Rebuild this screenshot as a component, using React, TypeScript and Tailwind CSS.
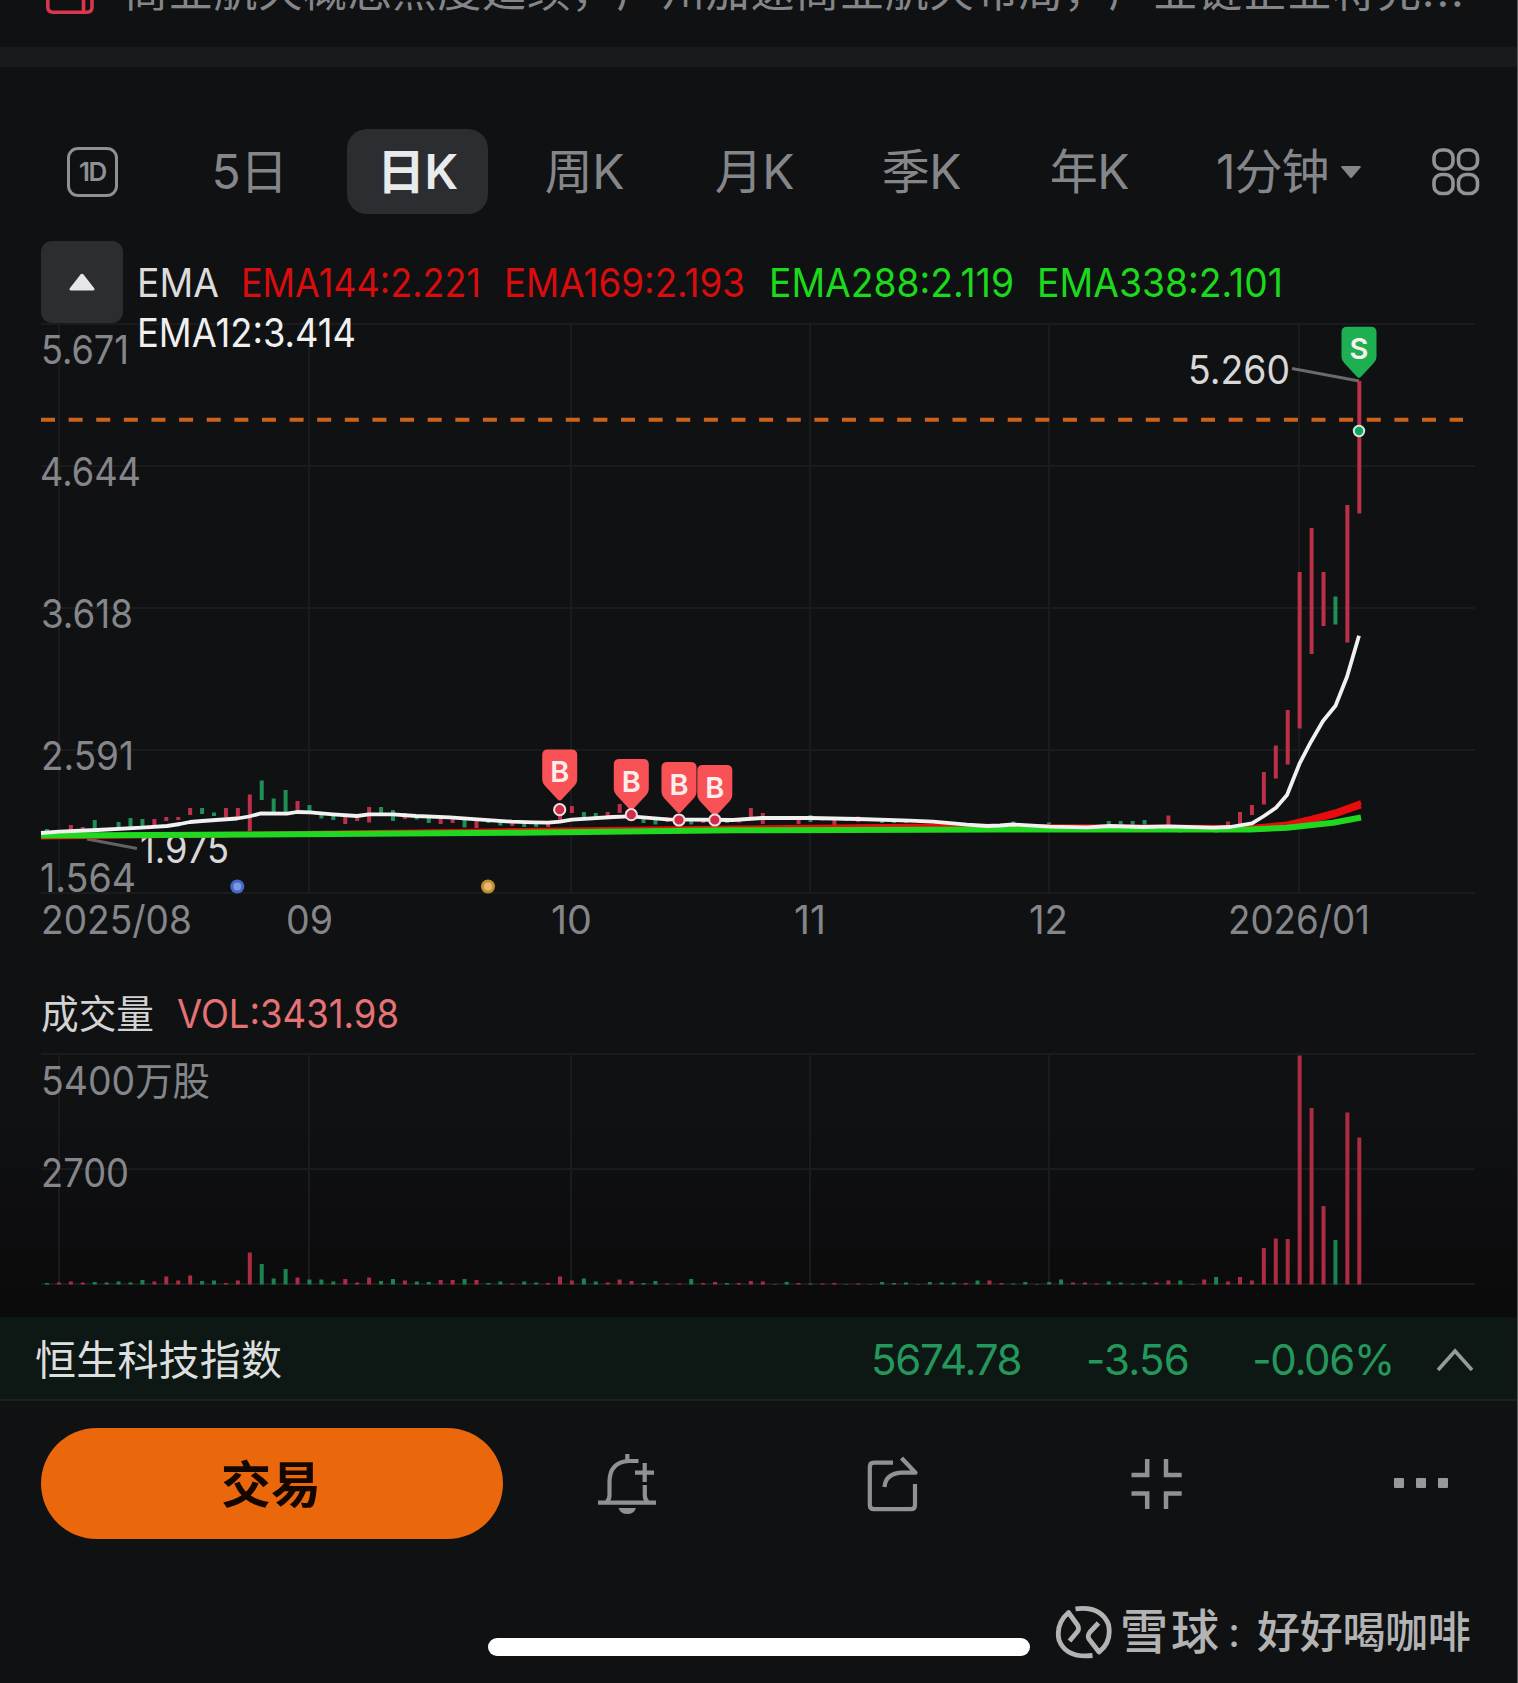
import React from 'react';

type Side = 'r' | 'g';
type Candle = [index: number, top: number, bottom: number, side: Side];
type Volume = [height: number, side: Side];

const RED = '#bd3049';
const GREEN = '#1f8f58';
const GRID = '#1a1b1d';
const FONT = 'Inter, "Noto Sans CJK SC", sans-serif';

const candleX = (index: number) => 47 + index * 11.93;

const tabs = [
  { label: '5日', box: 'ml-[61px] w-[141px]' },
  { label: '日K', box: 'ml-[27px] w-[141px]', active: true },
  { label: '周K', box: 'ml-[26px] w-[141px]' },
  { label: '月K', box: 'ml-[29px] w-[141px]' },
  { label: '季K', box: 'ml-[26px] w-[141px]' },
  { label: '年K', box: 'ml-[27px] w-[141px]' },
];

const candles: Candle[] = [
  [0, 829, 833, 'g'], [2, 825, 831, 'r'], [3, 827, 830, 'r'], [4, 820, 830, 'g'], [6, 822, 829, 'g'],
  [7, 818, 828, 'g'], [8, 819, 827, 'g'], [9, 819, 826, 'r'], [10, 817, 821, 'r'], [11, 817, 820, 'r'],
  [12, 808, 815, 'r'], [13, 808, 814, 'g'], [14, 812.5, 816, 'g'], [15, 808, 817, 'r'], [16, 808, 817, 'r'],
  [17, 794.5, 831, 'r'], [18, 780.5, 800, 'g'], [19, 798.5, 813, 'g'], [20, 790, 812, 'g'], [21, 801, 812, 'r'],
  [22, 805, 812, 'g'], [23, 815, 818.5, 'g'], [24, 816, 820, 'g'], [25, 817, 824, 'r'], [26, 816, 821, 'r'],
  [27, 807, 822.5, 'r'], [28, 807, 813, 'g'], [29, 810, 821, 'g'], [30, 813, 819, 'r'], [31, 816, 819.5, 'g'],
  [32, 817, 823, 'g'], [33, 817, 824, 'r'], [34, 818, 823, 'r'], [35, 818, 827.5, 'g'], [36, 818, 828, 'r'],
  [37, 819, 823, 'g'], [38, 820, 825.5, 'g'], [39, 821, 826, 'r'], [40, 822, 827, 'g'], [41, 823, 827, 'g'],
  [42, 822, 827, 'r'], [43, 805, 820, 'r'], [44, 806, 813, 'r'], [45, 812, 817, 'g'], [46, 813, 817, 'g'],
  [47, 812, 817, 'r'], [48, 804, 813, 'r'], [49, 805, 815, 'r'], [50, 817, 823, 'g'], [51, 818, 824.5, 'g'],
  [52, 817, 822, 'r'], [54, 819, 824.5, 'g'], [55, 819, 823, 'r'], [57, 818, 823, 'g'], [58, 819, 822.5, 'r'],
  [59, 808, 817, 'r'], [60, 813, 824, 'r'], [62, 816, 820, 'g'], [63, 818, 824, 'r'], [64, 815, 822, 'g'],
  [65, 817, 820.5, 'r'], [66, 820, 825.5, 'r'], [67, 818, 821, 'g'], [68, 816.5, 822, 'r'], [70, 820, 823, 'g'],
  [71, 820, 823, 'g'], [72, 820, 823, 'r'], [81, 821.5, 825, 'g'], [84, 822.5, 826, 'g'], [89, 821, 825, 'g'],
  [90, 821, 825, 'g'], [91, 821, 825, 'g'], [92, 820, 825, 'g'], [94, 815.5, 826, 'r'], [95, 829, 832.5, 'g'],
  [98, 829, 832.5, 'g'], [99, 821.5, 825, 'r'], [100, 812, 824.5, 'r'], [101, 805, 815, 'r'], [102, 772, 804.5, 'r'],
  [103, 745.5, 778.5, 'r'], [104, 710, 764.5, 'r'], [105, 572, 728.5, 'r'], [106, 528, 654, 'r'], [107, 572, 626, 'r'],
  [108, 596.5, 624.5, 'g'], [109, 505, 642.5, 'r'], [110, 381, 513.5, 'r'],
];

const volumes: Volume[] = [
  [1.5, 'g'], [2, 'r'], [3, 'r'], [2, 'r'], [2.5, 'g'], [2, 'g'], [3, 'g'], [2, 'g'], [4.5, 'g'], [3, 'r'],
  [8, 'r'], [4, 'r'], [9, 'r'], [3.5, 'g'], [4, 'g'], [1.5, 'r'], [4, 'r'], [32, 'r'], [20.5, 'g'], [6, 'g'],
  [15.5, 'g'], [7, 'r'], [5, 'g'], [5, 'g'], [3, 'g'], [5.5, 'r'], [2, 'r'], [7, 'r'], [3.5, 'g'], [5.5, 'g'],
  [4, 'r'], [3, 'g'], [2.5, 'g'], [4.5, 'r'], [4.5, 'r'], [5.5, 'g'], [4.5, 'r'], [1.5, 'g'], [3, 'g'], [1, 'r'],
  [3, 'g'], [2, 'g'], [1.5, 'r'], [8, 'r'], [4, 'r'], [6, 'g'], [3, 'g'], [2, 'r'], [5, 'r'], [3.5, 'r'],
  [1.5, 'g'], [3.5, 'g'], [1, 'r'], [1, 'r'], [5.5, 'g'], [1.5, 'r'], [2.5, 'r'], [1.5, 'g'], [1.5, 'r'], [3.5, 'r'],
  [3, 'r'], [0.5, 'g'], [2.5, 'g'], [1.5, 'r'], [1, 'g'], [1, 'r'], [1.5, 'r'], [0.5, 'g'], [1, 'r'], [0.5, 'r'],
  [2.5, 'g'], [1.5, 'g'], [2, 'g'], [0.5, 'g'], [2.5, 'g'], [2, 'g'], [2, 'g'], [1.5, 'r'], [4, 'g'], [4, 'r'],
  [1.5, 'r'], [1, 'g'], [2.5, 'g'], [0.5, 'g'], [2.5, 'g'], [5, 'g'], [2, 'r'], [2, 'r'], [1, 'r'], [3, 'g'],
  [2, 'g'], [1, 'g'], [2, 'g'], [2, 'r'], [4, 'r'], [4, 'g'], [0.5, 'g'], [5, 'r'], [7.5, 'g'], [3, 'r'],
  [7.5, 'r'], [4, 'r'], [36.5, 'r'], [46, 'r'], [45.5, 'r'], [229, 'r'], [176.5, 'r'], [78.5, 'r'], [44.5, 'g'], [172, 'r'],
  [147, 'r'],
];

const ema12 =
  '41,833 59,831.7 97,830 142,827.7 167,826 180,824 190,822 202,821 237,818.5 249,816.5 261,813.3 287,813.7 297,812 310,812.3 333,814.3 357,816 369,814.3 393,814.3 416,816 450,817.3 467,818.7 512,821.7 533,822.3 548,822.7 560,821.7 572,819.7 613,817 631,816.3 643,817.3 667,819.3 733,820 762,818 810,818 858,819 910,820.7 933,821.7 967,824.7 987,826 1000,825.5 1013,824.5 1050,826.7 1087,827.3 1110,826 1143,827 1168,826.3 1213,827.7 1230,827 1252,823.3 1264,816 1276,807.7 1287,795 1299.5,763.7 1311,741.7 1323,721 1335.5,705.7 1347,676.7 1359,635.7';

const buys = [
  { x: 559.7, top: 749.5, dot: 809.7 },
  { x: 631.3, top: 759, dot: 814.7 },
  { x: 679, top: 762, dot: 820 },
  { x: 714.8, top: 765, dot: 820 },
];

interface LabelProps {
  x: number;
  y: number;
  width: number;
  color?: string;
  size?: number;
  children: string;
}

const Label: React.FC<LabelProps> = ({ x, y, width, color = '#85868a', size = 39, children }) => (
  <text
    x={x}
    y={y}
    fontSize={size}
    fontFamily={FONT}
    fill={color}
    textLength={width}
    lengthAdjust="spacingAndGlyphs"
  >
    {children}
  </text>
);

const Pin: React.FC<{ x: number; top: number; color: string; letter: string }> = ({ x, top, color, letter }) => (
  <g transform={`translate(${x} ${top})`}>
    <path d="M-12 0H12Q17.5 0 17.5 5.500V30Q17.500 33 15 36L2 50Q0 52 -2 50L-15 36Q-17.500 33 -17.500 30V5.500Q-17.500 0 -12 0Z" fill={color} />
    <text y="32.500" fontSize="29" fontWeight="600" fontFamily={FONT} fill="#fdeeee" textAnchor="middle">
      {letter}
    </text>
  </g>
);

const NewsStrip = () => (
  <div className="flex h-[47px] shrink-0 overflow-hidden">
    <svg className="ml-[44px] h-[16px] w-[52px] shrink-0" viewBox="44 0 52 16" fill="none" stroke="#d93650" strokeWidth="3.6">
      <path d="M47.800 -20V7Q47.800 12.200 53 12.200H87Q92 12.200 92 7V-2H83.500V11" />
    </svg>
    <p className="-mt-[41px] ml-[28px] whitespace-nowrap text-[44px] leading-[64px] tracking-[0.750px] text-[#85868a]">
      商业航天概念热度延续，广州加速商业航天布局，产业链企业将充<span className="tracking-[2px]">...</span>
    </p>
  </div>
);

const PeriodTabs = () => (
  <nav className="flex h-[85px] items-center text-[#85868a]">
    <div className="ml-[67px] flex h-[50px] w-[51px] items-center justify-center rounded-[11px] border-[3.5px] border-[#8f9093] text-[26px] font-semibold leading-none tracking-[-1.5px] text-[#8f9093]">
      1D
    </div>
    {tabs.map((tab) => (
      <button
        key={tab.label}
        className={`flex h-full items-center justify-center rounded-[20px] pt-[1px] text-[48px] leading-none tracking-[-0.5px] ${tab.box} ${
          tab.active ? 'bg-[#2b2d31] font-semibold text-[#e9eaec]' : ''
        }`}
      >
        {tab.label}
      </button>
    ))}
    <button className="ml-[56px] flex items-center pt-[1px] text-[48px] leading-none tracking-[-1px]">
      1分钟
      <svg className="ml-[11px] h-[14px] w-[22px]" viewBox="0 0 22 14" fill="#85868a">
        <path d="M2 1H20Q21.500 1 20.500 2.500L12 12.500Q11 13.500 10 12.500L1.500 2.500Q.5 1 2 1Z" />
      </svg>
    </button>
    <svg className="ml-auto mr-[36px] h-[50px] w-[50px]" viewBox="0 0 50 50" fill="none" stroke="#929396" strokeWidth="3.600">
      <rect x="3" y="3" width="19" height="19" rx="7.500" />
      <rect x="27.500" y="3" width="19" height="19" rx="7.500" />
      <rect x="3" y="27.500" width="19" height="19" rx="7.500" />
      <rect x="27.500" y="27.500" width="19" height="19" rx="7.500" />
    </svg>
  </nav>
);

const PriceChart = () => (
  <section className="relative h-[740px] w-full">
    <svg className="block h-[740px] w-[1518px]" viewBox="0 220 1518 740" fill="none">
      {/* grid */}
      <g stroke={GRID} strokeWidth="2">
        {[324, 466, 608, 750, 893].map((y) => (
          <line key={y} x1="41" x2="1475" y1={y} y2={y} />
        ))}
        {[59, 309, 571, 810, 1049, 1299].map((x) => (
          <line key={x} x1={x} x2={x} y1="324" y2="893" />
        ))}
      </g>

      {/* indicator legend */}
      <Label x={137} y={296.5} width={82} color="#dcdcdc">EMA</Label>
      <Label x={241} y={296.5} width={240} color="#d90d0d">EMA144:2.221</Label>
      <Label x={504} y={296.5} width={241} color="#d90d0d">EMA169:2.193</Label>
      <Label x={769} y={296.5} width={245} color="#1cd91c">EMA288:2.119</Label>
      <Label x={1037} y={296.5} width={246} color="#1cd91c">EMA338:2.101</Label>
      <Label x={137} y={347} width={219} color="#f0f0f0">EMA12:3.414</Label>

      {/* price axis */}
      <Label x={41} y={364} width={88}>5.671</Label>
      <Label x={40} y={485.5} width={101}>4.644</Label>
      <Label x={41} y={628} width={92}>3.618</Label>
      <Label x={41} y={770} width={93}>2.591</Label>
      <Label x={40} y={892} width={96}>1.564</Label>

      <line x1="41" x2="1463" y1="419.700" y2="419.700" stroke="#cb621d" strokeWidth="4" strokeDasharray="14 13.620" />

      <line x1="87" y1="839" x2="137" y2="848.500" stroke="#626265" strokeWidth="3" />
      <Label x={140} y={863} width={89} color="#d8d8d8">1.975</Label>
      <line x1="1292" y1="368.500" x2="1359" y2="381" stroke="#6b6b6d" strokeWidth="3" />
      <Label x={1188} y={383.5} width={102} color="#d8d8d8">5.260</Label>

      {candles.map(([index, top, bottom, side]) => (
        <line
          key={index}
          x1={candleX(index)}
          x2={candleX(index)}
          y1={top}
          y2={bottom}
          stroke={side === 'r' ? RED : GREEN}
          strokeWidth="4"
        />
      ))}

      {/* moving averages */}
      <g strokeLinejoin="round">
        <polyline points="41,836.500 260,834 520,830.500 733,828 933,826 1000,826.500 1250,827.500 1287,824 1311,818.500 1335,812 1361,802.500" stroke="#e80c0c" strokeWidth="5" />
        <polyline points="41,837 260,834.500 520,831 733,829 1000,828 1250,828.500 1287,825 1311,820.500 1335,815 1361,806" stroke="#e80c0c" strokeWidth="5" />
        <polyline points="41,835.500 260,834.500 520,832.700 733,830.300 1000,829.500 1250,829.500 1287,827.700 1333,822.700 1361,817.500" stroke="#1fd81f" strokeWidth="6" />
        <polyline points={ema12} stroke="#f1f1f1" strokeWidth="3.800" />
      </g>

      {/* trade markers */}
      {buys.map((buy) => (
        <Pin key={buy.x} x={buy.x} top={buy.top} color="#f95256" letter="B" />
      ))}
      {buys.map((buy) => (
        <circle key={buy.x} cx={buy.x} cy={buy.dot} r="5.600" fill="#d02c4b" stroke="#f3dfe1" strokeWidth="2" />
      ))}
      <Pin x={1359} top={326.700} color="#1faf53" letter="S" />
      <circle cx="1359" cy="431" r="5.200" fill="#15a066" stroke="#c9ecd9" strokeWidth="2" />
      <circle cx="237.300" cy="886.500" r="7" fill="#4468c4" />
      <circle cx="237.300" cy="886.500" r="4" fill="#7b97e6" />
      <circle cx="488" cy="886.500" r="7" fill="#c0902f" />
      <circle cx="488" cy="886.500" r="4" fill="#e5b973" />

      {/* dates */}
      <Label x={41} y={933.5} width={151}>2025/08</Label>
      <Label x={286} y={933.5} width={47}>09</Label>
      <Label x={551} y={933.5} width={41}>10</Label>
      <Label x={794} y={933.5} width={32}>11</Label>
      <Label x={1029} y={933.5} width={39}>12</Label>
      <Label x={1228} y={933.5} width={142}>2026/01</Label>
    </svg>
    <button className="absolute left-[41px] top-[21px] flex h-[82px] w-[82px] items-center justify-center rounded-[11px] bg-[#2b2d31]">
      <svg className="h-[18px] w-[28px]" viewBox="0 0 28 18" fill="#e6e6e6">
        <path d="M12.500 1.500Q14 0 15.500 1.500L26 15Q27.500 17.500 25 17.500H3Q.5 17.500 2 15Z" />
      </svg>
    </button>
  </section>
);

const VolumeChart = () => (
  <section className="h-[357px] w-full bg-linear-to-b from-[#101113] from-40% to-[#0b0b0c] to-95%">
    <svg className="block h-[357px] w-[1518px]" viewBox="0 960 1518 357" fill="none">
      <g stroke={GRID} strokeWidth="2">
        {[1054, 1169, 1284].map((y) => (
          <line key={y} x1="41" x2="1475" y1={y} y2={y} />
        ))}
        {[59, 309, 571, 810, 1049].map((x) => (
          <line key={x} x1={x} x2={x} y1="1054" y2="1284" />
        ))}
      </g>
      <Label x={41} y={1028} width={113} color="#d3d3d3">成交量</Label>
      <Label x={177} y={1027.5} width={222} color="#e57375">VOL:3431.98</Label>
      <Label x={41} y={1095} width={169}>5400万股</Label>
      <Label x={41} y={1186.500} width={88}>2700</Label>
      {volumes.map(([height, side], index) => (
        <line
          key={index}
          x1={candleX(index)}
          x2={candleX(index)}
          y1={1284.500 - height}
          y2={1284.500}
          stroke={side === 'r' ? '#ab2c43' : '#1b8350'}
          strokeWidth="4"
        />
      ))}
    </svg>
  </section>
);

const IndexTicker = () => (
  <div className="flex h-[84px] items-center border-b-2 border-[#1a211f] bg-[#0d1714] pl-[35px] pr-[43px] pt-[4px] text-[42px] leading-none tracking-[-1.300px] text-[#24985c]">
    <span className="flex-1 text-[41px] tracking-[0.200px] text-[#dcdfde]">恒生科技指数</span>
    <span className="w-[150px] text-right">5674.78</span>
    <span className="ml-[18px] w-[150px] text-right tracking-[-0.800px]">-3.56</span>
    <span className="ml-[25px] w-[180px] text-right">-0.06%</span>
    <svg className="ml-[42px] h-[24px] w-[38px]" viewBox="0 0 38 24" fill="none" stroke="#989a99" strokeWidth="3.600">
      <path d="M2 22L19 3L36 22" />
    </svg>
  </div>
);

const ActionBar = () => (
  <footer className="mt-[27px] flex h-[111px] items-center">
    <button className="ml-[41px] flex h-[111px] w-[462px] items-center justify-center rounded-full bg-[#eb670c] pr-[2px] pt-[3px] text-[50px] font-bold leading-none text-[#140700]">
      交易
    </button>
    <svg className="ml-[93px] h-[64px] w-[62px]" viewBox="596 1451 62 64" fill="none" stroke="#909194" strokeWidth="4.200">
      <path d="M627.300 1453V1460" />
      <path d="M638.500 1460H629Q609.500 1461 609.500 1481V1494Q609.500 1499 606.500 1501M644.800 1484V1494Q644.800 1499 647.800 1501" />
      <path d="M598 1501.700H656M635 1471.700H654M644.700 1462V1481" />
      <path d="M618.500 1507H636Q634 1513 627.300 1513Q620.500 1513 618.500 1507Z" fill="#909194" stroke="none" />
    </svg>
    <svg className="ml-[207px] h-[64px] w-[56px]" viewBox="865 1451 56 64" fill="none" stroke="#909194" strokeWidth="4.200">
      <path d="M893 1461.700H874Q869.800 1461.700 869.800 1466V1504Q869.800 1508.200 874 1508.200H911Q915 1508.200 915 1504V1483" />
      <path d="M901.500 1457L915.500 1471.700H901Q885.500 1473 884.500 1486" strokeLinejoin="round" />
    </svg>
    <svg className="ml-[208px] h-[56px] w-[56px]" viewBox="1129 1455 56 56" fill="none" stroke="#909194" strokeWidth="4.500">
      <path d="M1147.200 1458V1474H1131.500M1166 1458V1474H1181.700M1147.200 1508V1492.500H1131.500M1166 1508V1492.500H1181.700" />
    </svg>
    <div className="-mt-[2px] ml-[209px] flex gap-[12px]">
      <i className="h-[10px] w-[10px] rounded-[1px] bg-[#97989a]" />
      <i className="h-[10px] w-[10px] rounded-[1px] bg-[#97989a]" />
      <i className="h-[10px] w-[10px] rounded-[1px] bg-[#97989a]" />
    </div>
  </footer>
);

const BottomStrip = () => (
  <div className="mt-[58px] flex h-[72px] text-[#b3b3b3]">
    <div className="ml-[488px] mt-[41px] h-[18px] w-[542px] rounded-full bg-white" />
    <svg className="ml-[25px] mt-[7px] h-[57px] w-[57px]" viewBox="1055 1604 57 57" fill="none" stroke="#b3b3b3" strokeWidth="4.800" strokeLinejoin="round">
      <path d="M1069.500 1641L1077.500 1631.500Q1079.500 1628.500 1077.500 1625L1068.500 1612.500Q1055.500 1624 1059 1640Q1066 1658.500 1092.500 1655.500" />
      <path d="M1098.500 1623L1090 1632Q1087 1635.500 1089 1639L1099 1652Q1112 1642 1108.500 1624.500Q1101 1605.500 1075.500 1608.800" />
    </svg>
    <div className="ml-[8px] mt-[9px] flex h-[52px] items-center whitespace-nowrap leading-none">
      <span className="text-[48px] font-medium tracking-[3px]">雪球</span>
      <span className="w-[35px] pl-[6px] text-[42px]">:</span>
      <span className="text-[43px] font-medium tracking-[-0.300px]">好好喝咖啡</span>
    </div>
  </div>
);

export default function App() {
  return (
    <main
      className={`flex h-[1683px] w-[1518px] flex-col overflow-hidden border-r-[1.500px] border-[#5c5c5e] bg-[#101113] font-[Inter,'Noto_Sans_CJK_SC',sans-serif]`}
    >
      <NewsStrip />
      <div className="h-[20px] bg-[#191a1c]" />
      <div className="mt-[62px]">
        <PeriodTabs />
      </div>
      <div className="mt-[6px]">
        <PriceChart />
        <VolumeChart />
      </div>
      <IndexTicker />
      <ActionBar />
      <BottomStrip />
    </main>
  );
}
